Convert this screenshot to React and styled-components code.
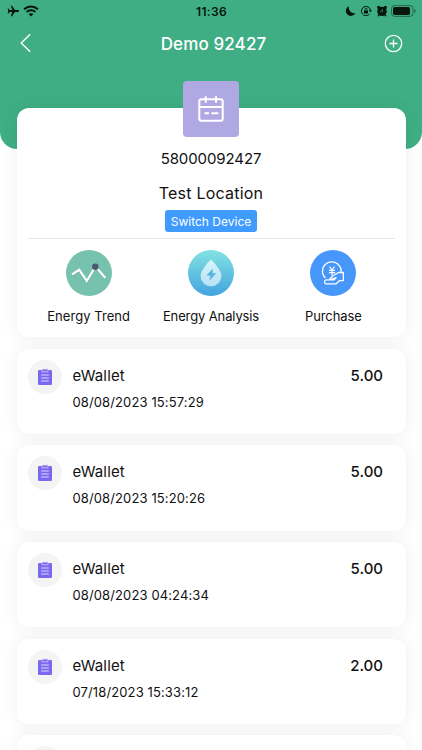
import React from "react";
import styled, { createGlobalStyle } from "styled-components";

const GlobalStyle = createGlobalStyle`
  * {
    box-sizing: border-box;
  }

  body {
    margin: 0;
    height: 750px;
    overflow: hidden;
    background: #ffffff;
    color: #111111;
    font-family: Inter, "Liberation Sans", sans-serif;
  }
`;

const Screen = styled.div`
  width: 422px;
  height: 750px;
  overflow: hidden;
`;

const Header = styled.header`
  height: 149px;
  border-radius: 0 0 17px 17px;
  background: #3fae84;
`;

const StatusBar = styled.div`
  height: 22px;
  padding: 0 6px 0 7px;
  display: grid;
  grid-template-columns: 1fr auto 1fr;
  align-items: center;
  color: #06150f;
`;

const StatusGroup = styled.div`
  display: flex;
  align-items: center;
  justify-content: ${({ $end }) => ($end ? "flex-end" : "flex-start")};
  gap: 4px;

  svg {
    display: block;
  }

  svg:nth-child(4) {
    margin-left: -1px;
  }
`;

const Clock = styled.span`
  font-size: 12px;
  font-weight: 600;
  letter-spacing: 0.3px;
`;

const NavBar = styled.nav`
  height: 42px;
  padding: 0 19.5px;
  display: flex;
  align-items: center;
  justify-content: space-between;
  color: #ffffff;

  svg {
    display: block;
  }
`;

const Title = styled.h1`
  margin: 0 0 0 12px;
  padding-top: 2px;
  font-size: 17px;
  font-weight: 500;
  letter-spacing: 0.12px;
  line-height: 22px;
`;

const Content = styled.main`
  margin-top: -41px;
  padding: 0 16.5px;
  display: flex;
  flex-direction: column;
  gap: 11.4px;
`;

const Card = styled.section`
  flex-shrink: 0;
  border-radius: 12px;
  background: #ffffff;
  box-shadow: 0 0 17px rgba(0, 0, 0, 0.07);
`;

const DeviceCard = styled(Card)`
  height: 229.3px;
  padding: 0 11px;
  display: flex;
  flex-direction: column;
  align-items: center;
`;

const DeviceBadge = styled.div`
  width: 56px;
  height: 56px;
  margin-top: -27.3px;
  flex-shrink: 0;
  display: flex;
  align-items: center;
  justify-content: center;
  border-radius: 4px;
  background: #b0a8e2;
`;

const DeviceNumber = styled.div`
  margin-top: 12.3px;
  font-size: 15px;
  line-height: 20px;
  letter-spacing: -0.1px;
`;

const DeviceName = styled.div`
  margin-top: 14px;
  font-size: 16px;
  line-height: 20px;
  letter-spacing: 0.22px;
`;

const SwitchButton = styled.button`
  width: 92px;
  height: 22px;
  margin-top: 7.3px;
  padding: 0;
  border: 0;
  border-radius: 3px;
  background: #409bff;
  color: #ffffff;
  font-family: inherit;
  font-size: 12px;
  letter-spacing: 0;
`;

const Actions = styled.div`
  width: 100%;
  margin-top: 5.4px;
  padding-top: 11px;
  display: grid;
  grid-template-columns: repeat(3, 1fr);
  border-top: 1px solid #e6e6e8;
`;

const Action = styled.div`
  display: flex;
  flex-direction: column;
  align-items: center;
  gap: 10.5px;
  font-size: 13px;
  line-height: 20px;
  letter-spacing: ${({ $spacing }) => $spacing};
  white-space: nowrap;

  svg {
    display: block;
  }
`;

const RecordCard = styled(Card)`
  height: 85.3px;
  padding: 11px 22.5px 0 11px;
  display: flex;
  align-items: flex-start;
`;

const RecordIcon = styled.div`
  width: 34px;
  height: 34px;
  display: flex;
  align-items: center;
  justify-content: center;
  border-radius: 50%;
  background: #f4f4f4;
`;

const RecordText = styled.div`
  flex: 1;
  margin-left: 11px;
  padding-top: 5px;
`;

const RecordName = styled.div`
  font-size: 15px;
  line-height: 22px;
  letter-spacing: 0.15px;
`;

const RecordDate = styled.div`
  margin-top: 4px;
  font-size: 13px;
  line-height: 22px;
  letter-spacing: 0.12px;
`;

const Amount = styled.div`
  padding-top: 5px;
  font-size: 15px;
  font-weight: 500;
  line-height: 22px;
  letter-spacing: 0;
`;

const PlaneIcon = () => (
  <svg width="12" height="12" viewBox="0 0 12 12" fill="currentColor">
    <path d="M12 6c0-.6-.6-1-1.400-1H8L5 .8H3.800L5.300 5H2.700L1.500 3.600H.6L1.300 6 .6 8.400h.9L2.700 7h2.600L3.800 11.200H5L8 7h2.600c.8 0 1.400-.4 1.400-1z" />
  </svg>
);

const WifiIcon = () => (
  <svg width="16" height="12" viewBox="0 0 16 12" fill="none" stroke="currentColor" strokeWidth="2">
    <path d="M1.100 4.200c3.900-3.700 9.900-3.700 13.800 0M3.600 7c2.500-2.300 6.300-2.300 8.800 0" />
    <path d="M8 11.500 5.600 9.100c1.300-1.200 3.500-1.200 4.800 0z" fill="currentColor" stroke="none" />
  </svg>
);

const MoonIcon = () => (
  <svg width="11" height="12" viewBox="0 0 11 12" fill="currentColor">
    <path d="M4.100 1.200A5 5 0 1 0 10.400 8 5.300 5.300 0 0 1 4.100 1.200z" />
  </svg>
);

const RotationLockIcon = () => (
  <svg width="12" height="12" viewBox="0 0 12 12" fill="none" stroke="currentColor">
    <path d="M9.300 9.300A4.600 4.600 0 1 1 10.500 5" />
    <path d="M8.800 5.200h3.200l-1.600 2z" fill="currentColor" stroke="none" />
    <rect x="4" y="5.400" width="4" height="3.200" rx=".5" fill="currentColor" stroke="none" />
    <path d="M4.900 5.600V4.500a1.100 1.100 0 0 1 2.200 0v1.100" strokeWidth=".8" />
  </svg>
);

const AlarmIcon = () => (
  <svg width="12" height="12" viewBox="0 0 12 12">
    <g fill="currentColor">
      <circle cx="6" cy="6.400" r="4.700" />
      <circle cx="2.700" cy="2.400" r="1.600" />
      <circle cx="9.300" cy="2.400" r="1.600" />
      <path d="m2.400 9.300 1.300 1.100-1.200 1.200-1-.7zM9.600 9.300l-1.300 1.100 1.200 1.200 1-.7z" />
    </g>
    <path d="M6.400 4.200v2.500H4.200" fill="none" stroke="#3fae84" strokeWidth=".7" />
  </svg>
);

const BatteryIcon = () => (
  <svg width="25" height="12" viewBox="0 0 25 12">
    <rect x=".5" y=".6" width="21.500" height="10.800" rx="3" fill="none" stroke="currentColor" strokeOpacity=".45" />
    <rect x="2" y="2.100" width="17" height="7.800" rx="1.700" fill="currentColor" />
    <path d="M23.300 4.100c1.800.6 1.800 3.200 0 3.800z" fill="currentColor" fillOpacity=".5" />
  </svg>
);

const BackIcon = () => (
  <svg width="12" height="20" viewBox="0 0 12 20" fill="none" stroke="currentColor" strokeWidth="1.400">
    <path d="m10.200 1.200-9 8.800 9 8.800" />
  </svg>
);

const AddIcon = () => (
  <svg width="19" height="19" viewBox="0 0 19 19" fill="none" stroke="currentColor" strokeWidth="1.300">
    <circle cx="9.500" cy="9.500" r="8.200" />
    <path d="M9.500 5.500v8M5.500 9.500h8" />
  </svg>
);

const CalendarIcon = () => (
  <svg width="28" height="28" viewBox="0 0 28 28" fill="none" stroke="#ffffff" strokeWidth="2">
    <rect x="2.300" y="4.300" width="23.400" height="21.400" rx="2" />
    <path d="M2.300 12h23.400M8.700 1.200v6.600M19 1.200v6.600M7.500 18.300H12M14.400 18.300h7" />
  </svg>
);

const TrendIcon = () => (
  <svg width="46" height="46" viewBox="0 0 46 46" fill="none">
    <circle cx="23" cy="23" r="23" fill="#76c2ae" />
    <path d="m6 25.300 7.200-4.700 7.600 11.300 8.600-14.500 10 11.200" stroke="#4f9584" strokeOpacity=".45" strokeWidth="2.200" />
    <path d="m6 24.500 7.200-4.700L20.800 31l8.600-14.400 10 11.400" stroke="#ffffff" strokeWidth="2.200" />
    <circle cx="29.300" cy="16.800" r="3.300" fill="#4b5a70" />
  </svg>
);

const AnalysisIcon = () => (
  <svg width="46" height="46" viewBox="0 0 46 46">
    <defs>
      <linearGradient id="analysis-bg" x1="0" y1="0" x2="0" y2="1">
        <stop offset="0" stopColor="#83e3e2" />
        <stop offset="1" stopColor="#43a3df" />
      </linearGradient>
      <linearGradient id="analysis-drop" x1="0" y1="0" x2="0" y2="1">
        <stop offset="0" stopColor="#d5f6f7" />
        <stop offset="1" stopColor="#b9e0f7" />
      </linearGradient>
    </defs>
    <circle cx="23" cy="23" r="23" fill="url(#analysis-bg)" />
    <path d="M23 10c1.500 0 10.400 10.500 10.400 15.800a10.400 10.400 0 0 1-20.800 0C12.600 20.500 21.500 10 23 10z" fill="url(#analysis-drop)" />
    <path d="m24.500 19.300-5.500 6h3.600l-.6 4.400 5.700-6.200h-3.600z" fill="#52b4df" stroke="#52b4df" strokeWidth=".6" strokeLinejoin="round" />
  </svg>
);

const PurchaseIcon = () => (
  <svg width="46" height="46" viewBox="0 0 46 46" fill="none" stroke="#ffffff" strokeWidth="1.300" strokeLinejoin="round">
    <circle cx="23" cy="23" r="23" fill="#4796fa" stroke="none" />
    <path d="M15.500 28a9.300 9.300 0 1 1 15.500-5.500" />
    <path d="m19.500 16.700 2.500 3.300 2.500-3.300M22 20v5.200M18.900 20.300h6.200M18.900 22.700h6.200" strokeWidth="1.200" />
    <path d="M33.300 22.500h-4.600l-5.800 3.200-2.900 3 .9 1 5.200-2-2.200 2.200h-7.800c-2 0-2 4 0 4h9.800l3.800-3.300h3.600z" />
  </svg>
);

const ClipboardIcon = () => (
  <svg width="16" height="18" viewBox="0 0 16 18">
    <rect x="1" y="2" width="14" height="15" rx="1.300" fill="#7b68f0" />
    <path d="M5 1.100h6v2.700H5z" fill="#7b68f0" stroke="#ded9fb" strokeWidth=".7" />
    <path d="M4.200 7h7.600M4.200 10h7.600M4.200 13h7.600" stroke="#ded9fb" strokeWidth="1" />
  </svg>
);

const actions = [
  { label: "Energy Trend", icon: TrendIcon, spacing: "0.06px" },
  { label: "Energy Analysis", icon: AnalysisIcon, spacing: "-0.12px" },
  { label: "Purchase", icon: PurchaseIcon, spacing: "-0.1px" },
];

const records = [
  { date: "08/08/2023 15:57:29", amount: "5.00" },
  { date: "08/08/2023 15:20:26", amount: "5.00" },
  { date: "08/08/2023 04:24:34", amount: "5.00" },
  { date: "07/18/2023 15:33:12", amount: "2.00" },
];

const App = () => (
  <>
    <GlobalStyle />
    <Screen>
      <Header>
        <StatusBar>
          <StatusGroup>
            <PlaneIcon />
            <WifiIcon />
          </StatusGroup>
          <Clock>11:36</Clock>
          <StatusGroup $end>
            <MoonIcon />
            <RotationLockIcon />
            <AlarmIcon />
            <BatteryIcon />
          </StatusGroup>
        </StatusBar>
        <NavBar>
          <BackIcon />
          <Title>Demo 92427</Title>
          <AddIcon />
        </NavBar>
      </Header>

      <Content>
        <DeviceCard>
          <DeviceBadge>
            <CalendarIcon />
          </DeviceBadge>
          <DeviceNumber>58000092427</DeviceNumber>
          <DeviceName>Test Location</DeviceName>
          <SwitchButton>Switch Device</SwitchButton>
          <Actions>
            {actions.map(({ label, icon: Icon, spacing }) => (
              <Action key={label} $spacing={spacing}>
                <Icon />
                {label}
              </Action>
            ))}
          </Actions>
        </DeviceCard>

        {records.map(({ date, amount }) => (
          <RecordCard key={date}>
            <RecordIcon>
              <ClipboardIcon />
            </RecordIcon>
            <RecordText>
              <RecordName>eWallet</RecordName>
              <RecordDate>{date}</RecordDate>
            </RecordText>
            <Amount>{amount}</Amount>
          </RecordCard>
        ))}

        {/* next record, cut off by the bottom of the screen */}
        <RecordCard>
          <RecordIcon />
        </RecordCard>
      </Content>
    </Screen>
  </>
);

export default App;
